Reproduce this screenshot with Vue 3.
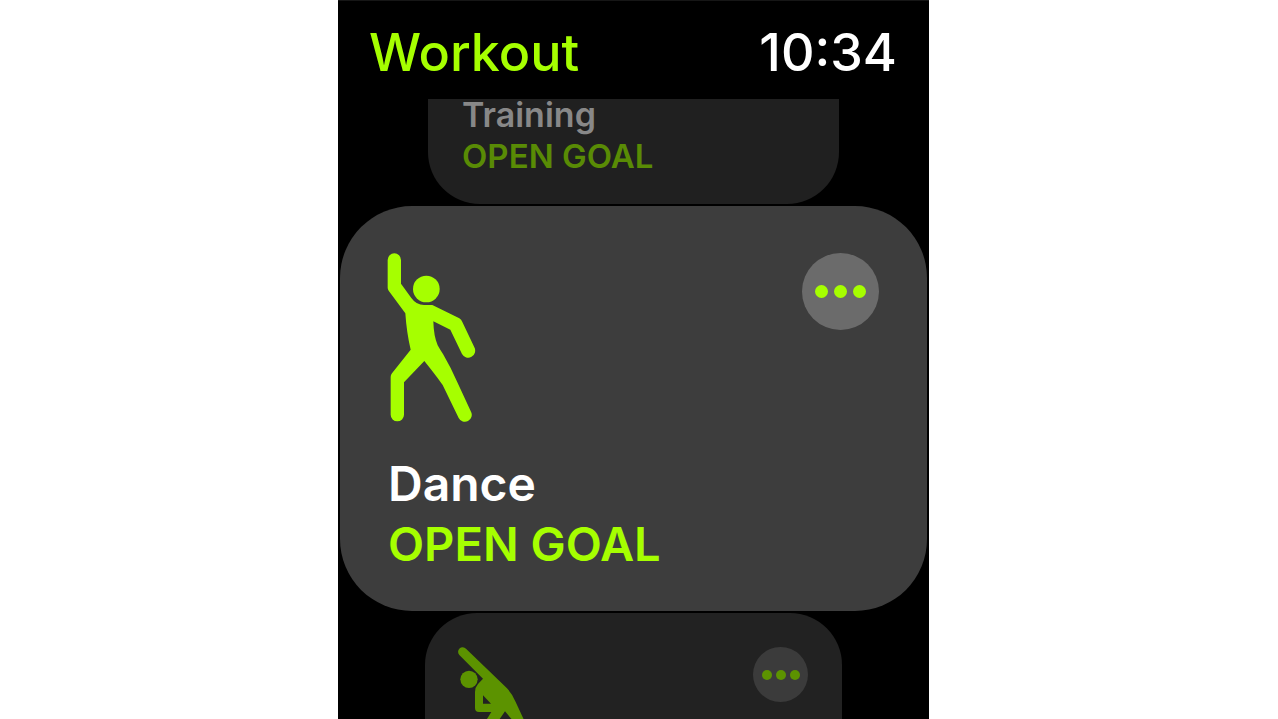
<template>
  <div class="page">
    <main class="watch">
      <header class="status-bar">
        <h1>Workout</h1>
        <time>{{ time }}</time>
      </header>

      <section class="workout-list">
        <article class="card card-prev">
          <h2>Training</h2>
          <p>OPEN GOAL</p>
        </article>

        <article class="card card-active">
          <div class="card-top">
            <svg class="icon-dance" viewBox="54 38 264 504" aria-hidden="true">
              <circle cx="169" cy="146" r="40" />
              <path d="M53 59 A20 20 0 0 1 93 59 V130 L124 173 Q139 194 162 194 H187 L268 234 Q274 238 277 245 L313 321 A20 20 0 0 1 276 341 L241 268 L190 243 Q191 287 203 315 Q210 328 219 341 Q243 382 262 426 L303 514 A20 20 0 0 1 266 533 L218 434 Q202 412 185 390 L163 362 L102 426 V523 A20 20 0 0 1 62 523 V410 Q62 404 66 399 L122 328 Q110 278 106 219 L56 151 Q53 147 53 142 Z" />
            </svg>
            <button class="more" type="button" aria-label="Dance options">
              <span v-for="n in 3" :key="n" class="dot"></span>
            </button>
          </div>
          <h2>Dance</h2>
          <p>OPEN GOAL</p>
        </article>

        <article class="card card-next">
          <div class="card-top">
            <svg class="icon-stretch" viewBox="129 123 198 219" aria-hidden="true">
              <circle cx="162" cy="220" r="26" />
              <path fill-rule="evenodd" d="M133 147 A13 13 0 0 1 153 128 L276 247 Q292 263 302 288 L327 342 H292 L270 316 L252 342 H214 L229 318 H192 Q180 318 180 306 V258 Q180 244 189 234 L204 218 Z M204 268 V293 H228 Z" />
            </svg>
            <button class="more" type="button" aria-label="Next workout options">
              <span v-for="n in 3" :key="n" class="dot"></span>
            </button>
          </div>
        </article>
      </section>
    </main>
  </div>
</template>

<script setup>
import { ref } from 'vue';

const time = ref('10:34');
</script>

<style>
body {
  margin: 0;
  background: #fff;
}
</style>

<style scoped>
.page {
  display: flex;
  justify-content: center;
  height: 100vh;
  padding-right: 11px;
  font-family: Inter, Roboto, "Liberation Sans", sans-serif;
}

.watch {
  display: flex;
  flex-direction: column;
  width: 100%;
  max-width: 591px;
  overflow: hidden;
  background: #000;
  box-sizing: border-box;
  border-top: 1px solid #161616;
}

.status-bar {
  display: flex;
  flex: none;
  justify-content: space-between;
  align-items: center;
  padding: 20px 32px 14px 31px;
  line-height: 64px;
}

.status-bar h1 {
  margin: 0;
  font-size: 52px;
  font-weight: 500;
  color: #a6ff00;
}

.status-bar time {
  font-size: 52px;
  font-weight: 500;
  color: #fff;
}

.workout-list {
  display: flex;
  flex: 1;
  flex-direction: column;
  gap: 2px;
  min-height: 0;
}

.card {
  flex: none;
  box-sizing: border-box;
}

.card h2,
.card p {
  margin: 0;
  font-weight: 600;
}

.card-top {
  display: flex;
  justify-content: space-between;
  align-items: flex-start;
}

.card-active {
  margin: 0 2px;
  padding: 47px 48px 37px;
  border-radius: 72px;
  background: #3d3d3d;
  font-size: 47px;
  line-height: 60px;
}

.card-active .card-top {
  margin-bottom: 33px;
}

.card-active h2 {
  font-size: 48px;
  color: #fff;
}

.card-active p {
  color: #a6ff00;
}

/* 上方的卡片只露出下半部分 */
.card-prev {
  display: flex;
  flex-direction: column;
  gap: 4px;
  margin: 0 90px;
  padding: 0 34px 27px;
  border-radius: 0 0 52px 52px;
  background: #202020;
  font-size: 33px;
  line-height: 42px;
}

.card-prev h2 {
  font-size: 34px;
  line-height: 32px;
  color: #888;
}

.card-prev p {
  color: #598b05;
}

.card-next {
  height: 286px;
  margin: 0 87px;
  padding: 34px 34px 33px 33px;
  border-radius: 52px;
  background: #222;
}

.icon-dance {
  width: 88px;
  height: 168px;
  overflow: visible;
  fill: #a6ff00;
}

.icon-stretch {
  width: 66px;
  height: 73px;
  fill: #5c9300;
}

.more {
  display: flex;
  justify-content: center;
  align-items: center;
  gap: 6px;
  width: 77px;
  height: 77px;
  padding: 0;
  border: none;
  border-radius: 50%;
  background: #6b6b6b;
}

.dot {
  width: 13px;
  height: 13px;
  border-radius: 50%;
  background: #a6ff00;
}

.card-next .more {
  gap: 4px;
  width: 55px;
  height: 55px;
  background: #3b3b3b;
}

.card-next .dot {
  width: 10px;
  height: 10px;
  background: #5c9300;
}
</style>
